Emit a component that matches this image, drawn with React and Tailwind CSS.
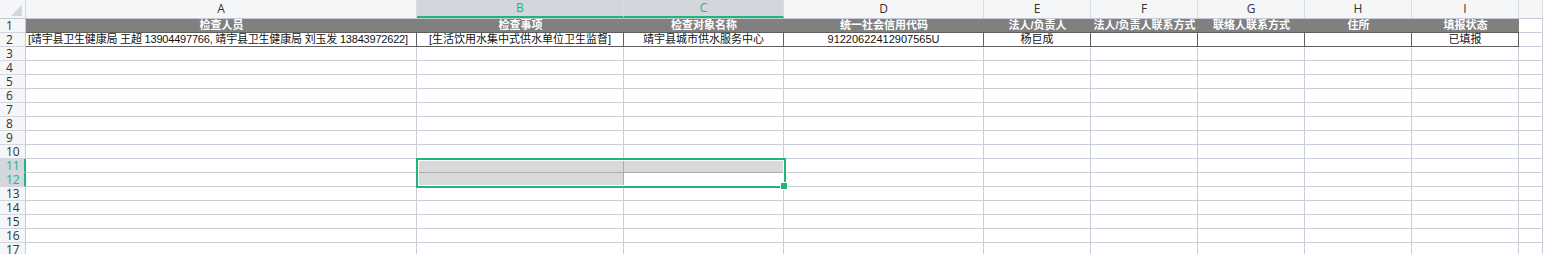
const cols = [
  { key: 'A', w: 391 },
  { key: 'B', w: 207 },
  { key: 'C', w: 160 },
  { key: 'D', w: 200 },
  { key: 'E', w: 107 },
  { key: 'F', w: 107 },
  { key: 'G', w: 107 },
  { key: 'H', w: 107 },
  { key: 'I', w: 107 },
  { key: 'J', w: 0 },
]

const headers = ['检查人员', '检查事项', '检查对象名称', '统一社会信用代码', '法人/负责人', '法人/负责人联系方式', '联络人联系方式', '住所', '填报状态']

const row2 = [
  '[靖宇县卫生健康局 王超 13904497766, 靖宇县卫生健康局 刘玉发 13843972622]',
  '[生活饮用水集中式供水单位卫生监督]',
  '靖宇县城市供水服务中心',
  '91220622412907565U',
  '杨巨成',
  '',
  '',
  '',
  '已填报',
]

const selectedCols = ['B', 'C']
const selectedRows = [11, 12]
const grayCells = ['B11', 'B12', 'C11']

const font = { fontFamily: '"Liberation Sans", "Noto Sans CJK SC", sans-serif' }
const headFont = { fontFamily: '"Open Sans", "Liberation Sans", sans-serif' }

function ColumnHeader() {
  return (
    <div className="flex h-[19px] bg-[#f5f6f8] border-b border-[#c5c9d6]" style={headFont}>
      <div className="relative w-[26px] shrink-0 border-r border-[#d4d7de]">
        <svg className="absolute bottom-[2px] right-[3px]" width="11" height="11" viewBox="0 0 11 11">
          <polygon points="11,0 11,11 0,11" fill="#d2d5da" />
        </svg>
      </div>
      {cols.map((c) => {
        const sel = selectedCols.includes(c.key)
        return (
          <div
            key={c.key}
            className={`flex items-center justify-center border-r border-[#d9dce3] text-[12px] ${
              c.w === 0 ? 'flex-1' : 'shrink-0'
            } ${sel ? 'bg-[#d3d6dc] text-[#1fb574] border-b-2 border-b-[#21b577]' : 'text-[#333]'}`}
            style={c.w ? { width: c.w } : undefined}
          >
            {c.key === 'J' ? '' : c.key}
          </div>
        )
      })}
    </div>
  )
}

function Row({ n }) {
  const sel = selectedRows.includes(n)
  return (
    <div className="flex h-[14px]">
      <div
        className={`flex w-[26px] shrink-0 items-center pl-[6px] text-[12px] leading-none border-b border-[#d4d7de] ${
          sel ? 'bg-[#d3d6dc] text-[#1fb574] border-r-2 border-r-[#21b577]' : 'bg-[#f5f6f8] text-[#333] border-r border-r-[#c5c9d6]'
        }`}
        style={headFont}
      >
        {n}
      </div>
      {cols.map((c, i) => {
        const id = c.key + n
        const isHead = n === 1 && c.key !== 'J'
        const isData = n === 2 && c.key !== 'J'
        let cls = 'border-r border-b border-[#c9cedb] bg-white'
        if (isHead) cls = 'bg-[#808080] text-white font-bold border-b border-[#5f5f5f]'
        if (isData) cls = 'bg-white text-[#111] border-r border-b border-[#5f5f5f]'
        if (grayCells.includes(id)) cls = 'border-r border-b border-[#a8adb8] bg-[#d9d9d9]'
        return (
          <div
            key={c.key}
            className={`flex items-center overflow-hidden whitespace-nowrap text-[11px] leading-none ${
              c.w === 0 ? 'flex-1' : 'shrink-0'
            } ${isData && i === 0 ? 'justify-start pl-[2px] tracking-[-0.2px]' : 'justify-center'} ${cls}`}
            style={c.w ? { width: c.w } : undefined}
          >
            {isHead ? headers[i] : isData ? row2[i] : ''}
          </div>
        )
      })}
    </div>
  )
}

export default function App() {
  const rows = Array.from({ length: 17 }, (_, i) => i + 1)
  return (
    <div className="relative h-[254px] w-[1543px] overflow-hidden bg-white" style={font}>
      <ColumnHeader />
      {rows.map((n) => (
        <Row key={n} n={n} />
      ))}
      <div className="pointer-events-none absolute left-[416px] top-[158px] h-[30px] w-[370px] border-2 border-[#21b577]">
        <div className="h-full w-full border border-white" />
      </div>
      <div className="absolute left-[781px] top-[183px] h-[6px] w-[6px] bg-[#21b577] ring-1 ring-white" />
    </div>
  )
}
